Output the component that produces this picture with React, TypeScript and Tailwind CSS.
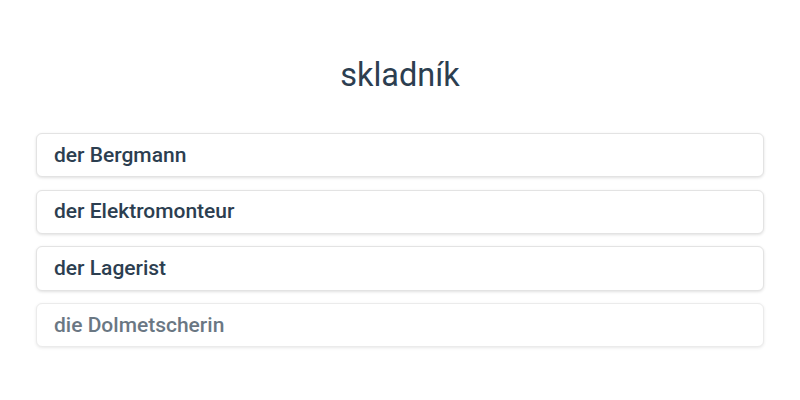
import React from "react";

const items = [
  { text: "der Bergmann", faded: false },
  { text: "der Elektromonteur", faded: false },
  { text: "der Lagerist", faded: false },
  { text: "die Dolmetscherin", faded: true },
];

export default function App() {
  return (
    <div
      className="w-[800px] h-[400px] bg-white text-[#2c3e50]"
      style={{ fontFamily: "Roboto, 'Noto Sans', sans-serif" }}
    >
      <div className="pt-[51px] flex flex-col items-center">
        <h1 className="text-[32.5px] leading-[48px] font-normal">skladník</h1>
      </div>
      <div className="mt-[34px] mx-[36px] flex flex-col gap-[12.5px]">
        {items.map((it) => (
          <div
            key={it.text}
            className={`h-[44.2px] flex items-center px-[17px] rounded-[6px] border border-[#e3e3e3] bg-white shadow-[0_1px_3px_rgba(0,0,0,0.12)] ${
              it.faded ? "opacity-70" : ""
            }`}
          >
            <span className="text-[21px] font-medium leading-none">{it.text}</span>
          </div>
        ))}
      </div>
    </div>
  );
}
